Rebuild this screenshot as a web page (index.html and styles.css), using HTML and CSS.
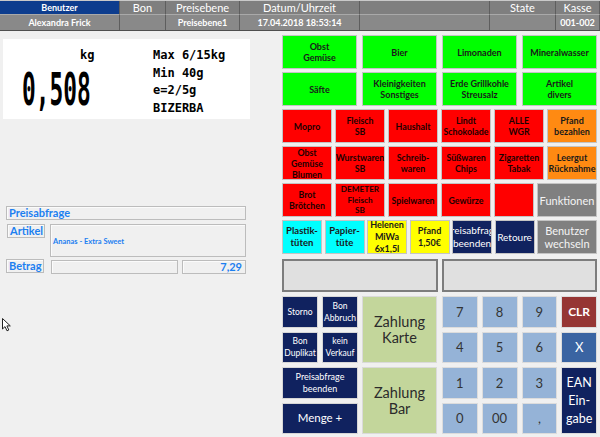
FILE: index.html
```html
<!DOCTYPE html>
<html lang="de">
<head>
<meta charset="utf-8">
<title>Kasse</title>
<link rel="stylesheet" href="styles.css">
</head>
<body>
<div class="app">
  <header class="topbar">
    <div class="cell head user">Benutzer</div>
    <div class="cell head">Bon</div>
    <div class="cell head">Preisebene</div>
    <div class="cell head">Datum/Uhrzeit</div>
    <div class="cell head"></div>
    <div class="cell head">State</div>
    <div class="cell head">Kasse</div>
    <div class="cell val">Alexandra Frick</div>
    <div class="cell val"></div>
    <div class="cell val">Preisebene1</div>
    <div class="cell val">17.04.2018 18:53:14</div>
    <div class="cell val"></div>
    <div class="cell val"></div>
    <div class="cell val">001-002</div>
  </header>
  <main class="main">
    <section class="left">
      <div class="scale">
        <div class="weight">
          <div class="unit">kg</div>
          <div class="num">0,508</div>
        </div>
        <div class="specs">Max 6/15kg<br>Min 40g<br>e=2/5g<br>BIZERBA</div>
      </div>
      <div class="query">
        <div class="q-title">Preisabfrage</div>
        <div class="q-row art">
          <div class="q-label">Artikel</div>
          <div class="q-box art-box">Ananas - Extra Sweet</div>
        </div>
        <div class="q-row sum">
          <div class="q-label">Betrag</div>
          <div class="q-box blank"></div>
          <div class="q-box amount">7,29</div>
        </div>
      </div>
      <svg class="cursor" width="10" height="14" viewBox="0 0 10 14"><path d="M0.5 0.5 L0.5 11 L3 8.6 L5 12.8 L6.8 12 L4.9 7.9 L8.3 7.9 Z" fill="#fff" stroke="#222" stroke-width="1"/></svg>
    </section>
    <section class="right">
      <div class="grid g4">
        <div class="btn green"><span>Obst<br>Gemüse</span></div>
        <div class="btn green"><span>Bier</span></div>
        <div class="btn green"><span>Limonaden</span></div>
        <div class="btn green"><span>Mineralwasser</span></div>
        <div class="btn green"><span>Säfte</span></div>
        <div class="btn green"><span>Kleinigkeiten<br>Sonstiges</span></div>
        <div class="btn green"><span>Erde Grillkohle<br>Streusalz</span></div>
        <div class="btn green"><span>Artikel<br>divers</span></div>
      </div>
      <div class="grid g6">
        <div class="btn red"><span>Mopro</span></div>
        <div class="btn red"><span>Fleisch<br>SB</span></div>
        <div class="btn red"><span>Haushalt</span></div>
        <div class="btn red"><span>Lindt<br>Schokolade</span></div>
        <div class="btn red"><span>ALLE<br>WGR</span></div>
        <div class="btn orange"><span>Pfand<br>bezahlen</span></div>
        <div class="btn red"><span>Obst<br>Gemüse<br>Blumen</span></div>
        <div class="btn red"><span>Wurstwaren<br>SB</span></div>
        <div class="btn red"><span>Schreib-<br>waren</span></div>
        <div class="btn red"><span>Süßwaren<br>Chips</span></div>
        <div class="btn red"><span>Zigaretten<br>Tabak</span></div>
        <div class="btn orange"><span>Leergut<br>Rücknahme</span></div>
      </div>
      <div class="grid g6b">
        <div class="btn red"><span>Brot<br>Brötchen</span></div>
        <div class="btn red small"><span>DEMETER<br>Fleisch<br>SB</span></div>
        <div class="btn red"><span>Spielwaren</span></div>
        <div class="btn red"><span>Gewürze</span></div>
        <div class="btn red"></div>
        <div class="btn gray"><span>Funktionen</span></div>
      </div>
      <div class="grid g7">
        <div class="btn cyan"><span>Plastik-<br>tüten</span></div>
        <div class="btn cyan"><span>Papier-<br>tüte</span></div>
        <div class="btn yellow"><span>Helenen<br>MiWa<br>6x1,5l</span></div>
        <div class="btn yellow"><span>Pfand<br>1,50€</span></div>
        <div class="btn navy clip"><span>Preisabfrage<br>beenden</span></div>
        <div class="btn navy ret"><span>Retoure</span></div>
        <div class="btn gray"><span>Benutzer<br>wechseln</span></div>
      </div>
      <div class="displays">
        <div class="display"></div>
        <div class="display"></div>
      </div>
      <div class="pad">
        <div class="grid actions">
          <div class="btn navy act"><span>Storno</span></div>
          <div class="btn navy act"><span>Bon<br>Abbruch</span></div>
          <div class="btn pay karte"><span>Zahlung<br>Karte</span></div>
          <div class="btn navy act"><span>Bon<br>Duplikat</span></div>
          <div class="btn navy act"><span>kein<br>Verkauf</span></div>
          <div class="btn navy act wide"><span>Preisabfrage<br>beenden</span></div>
          <div class="btn pay bar"><span>Zahlung<br>Bar</span></div>
          <div class="btn navy act wide menge"><span>Menge +</span></div>
        </div>
        <div class="grid keys">
          <div class="btn key"><span>7</span></div>
          <div class="btn key"><span>8</span></div>
          <div class="btn key"><span>9</span></div>
          <div class="btn key clr"><span>CLR</span></div>
          <div class="btn key"><span>4</span></div>
          <div class="btn key"><span>5</span></div>
          <div class="btn key"><span>6</span></div>
          <div class="btn key mul"><span>X</span></div>
          <div class="btn key"><span>1</span></div>
          <div class="btn key"><span>2</span></div>
          <div class="btn key"><span>3</span></div>
          <div class="btn key ean"><span>EAN<br>Ein-<br>gabe</span></div>
          <div class="btn key"><span>0</span></div>
          <div class="btn key"><span>00</span></div>
          <div class="btn key"><span>,</span></div>
        </div>
      </div>
    </section>
  </main>
</div>
</body>
</html>
```

FILE: styles.css
```css
* { box-sizing: border-box; margin: 0; padding: 0; }
html, body { width: 600px; height: 437px; overflow: hidden; }
body { background: #f0f0f0; font-family: Lato, "Open Sans", sans-serif; }

.app { display: flex; flex-direction: column; height: 437px; }

/* header */
.topbar {
  display: grid;
  grid-template-columns: 120px 46px 74px 120px 130px 66px 44px;
  grid-template-rows: 14px 15px;
  height: 31px;
  border-top: 1px solid #c9c9c9;
  border-bottom: 1px solid #4f4f4f;
  background: #7f7f7f;
}
.cell {
  display: flex; align-items: center; justify-content: center;
  color: #fff; white-space: nowrap; overflow: hidden;
  border-right: 1px solid #5e5e5e;
}
.head { font-size: 11px; background: #7f7f7f; border-bottom: 1px solid #a9a9a9; }
.head.user { background: #0d3d8e; font-size: 9px; font-weight: 700; }
.val { font-size: 9px; font-weight: 700; background: #898989; }

/* main */
.main { display: flex; flex: 1; }
.left { width: 280px; position: relative; }

.scale {
  display: flex;
  margin: 8px 0 0 3px;
  width: 247px; height: 80px;
  background: #fff;
  font-family: "DejaVu Sans Mono", monospace; font-weight: 700; color: #000;
}
.weight { width: 150px; }
.unit { font-size: 12px; line-height: 14px; margin: 9px 0 0 77px; }
.num {
  font-size: 44px; line-height: 44px;
  margin: 6px 0 0 19px;
  width: max-content;
  transform: scaleX(0.52); transform-origin: 0 0;
}
.specs { font-size: 12px; line-height: 17.7px; margin-top: 8px; }

.query { margin: 87px 0 0 6px; width: 240px; color: #1c7ff0; font-weight: 700; }
.q-title, .q-label, .q-box {
  border: 1px solid #bcbcbc;
  box-shadow: inset 1px 1px 0 #fbfbfb;
}
.q-title { height: 14px; font-size: 11px; line-height: 12px; padding-left: 2px; }
.q-row { display: flex; align-items: flex-start; }
.q-label { width: 38px; height: 14px; font-size: 11px; line-height: 12px; padding-left: 2px; }
.art { margin-top: 4px; }
.art .q-label { margin-left: 1px; }
.art-box { margin-left: 5px; width: 196px; height: 33px; font-size: 7.5px; line-height: 8px; padding: 13px 0 0 2px; }
.sum { margin-top: 2px; }
.blank { margin: 1px 0 0 7px; width: 127px; height: 14px; }
.amount { margin: 1px 0 0 4px; width: 64px; height: 14px; font-size: 11px; line-height: 12px; text-align: right; padding-right: 3px; }

.cursor { position: absolute; left: 2px; top: 287px; }

/* right */
.right { flex: 1; padding: 4px 3px 0 2px; display: flex; flex-direction: column; }
.grid { display: grid; }
.g4 { grid-template-columns: repeat(4, 1fr); grid-template-rows: 34px 34px; column-gap: 5px; row-gap: 3px; }
.g6 { grid-template-columns: repeat(6, 1fr); grid-template-rows: 34px 34px; column-gap: 3px; row-gap: 3px; margin-top: 3px; }
.g6b { grid-template-columns: 50px 50px 50px 50px 40px 60px; grid-template-rows: 34px; column-gap: 3px; margin-top: 3px; }
.g7 { grid-template-columns: repeat(6, 1fr) 60px; grid-template-rows: 34px; column-gap: 2.5px; margin-top: 3px; }

.btn {
  display: flex; align-items: center; justify-content: center;
  text-align: center; overflow: hidden; white-space: nowrap;
  border: 1px solid #c4c4c4;
  font-weight: 700; font-size: 9px; line-height: 11px; color: #1a1a1a;
}
.green { background: #00ff00; }
.red { background: #ff0000; color: #1c0000; font-size: 8.8px; line-height: 11px; }
.red.small { font-size: 8.2px; line-height: 10.5px; }
.orange { background: #ff8a12; font-size: 9px; }
.gray { background: #808080; color: #f4f4f4; font-weight: 400; font-size: 11px; line-height: 13px; }
.cyan { background: #00ffff; font-size: 9.5px; line-height: 12px; }
.yellow { background: #ffff00; font-size: 9px; line-height: 12px; }
.navy { background: #10225f; color: #fff; font-weight: 400; font-size: 10.5px; line-height: 13px; }
.clip { font-size: 10px; }
.ret { font-size: 10px; }

.displays { display: flex; gap: 4px; margin-top: 5px; height: 33px; }
.display { flex: 1; background: #e0e0e0; border: 2px solid #7d7d7d; }
.display:first-child { flex: 0 0 156px; }

.pad { display: flex; gap: 5px; margin-top: 4px; }
.actions { width: 155px; grid-template-columns: 36px 36px 75px; grid-template-rows: repeat(4, 31.5px); gap: 4px; }
.keys { flex: 1; grid-template-columns: repeat(4, 1fr); grid-template-rows: repeat(4, 31.5px); gap: 4px; }

.act { font-size: 8.5px; line-height: 12px; border-color: #d6d6d6; }
.wide { grid-column: 1 / span 2; font-size: 9px; }
.menge { font-size: 11.5px; }
.karte { grid-column: 3; grid-row: 1 / span 2; }
.bar { grid-column: 3; grid-row: 3 / span 2; }
.pay { background: #c3d69b; color: #2b2b2b; font-weight: 400; font-size: 14.5px; line-height: 16px; border-color: #dadada; }

.key { background: #95b3d7; color: #333; font-weight: 400; font-size: 13px; line-height: 16px; border-color: #dcdcdc; }
.clr { background: #963634; color: #fff; font-weight: 700; font-size: 12px; }
.mul { background: #3a64a2; color: #fff; }
.ean { grid-column: 4; grid-row: 3 / span 2; background: #10225f; color: #fff; font-size: 12.5px; line-height: 18px; }
```
